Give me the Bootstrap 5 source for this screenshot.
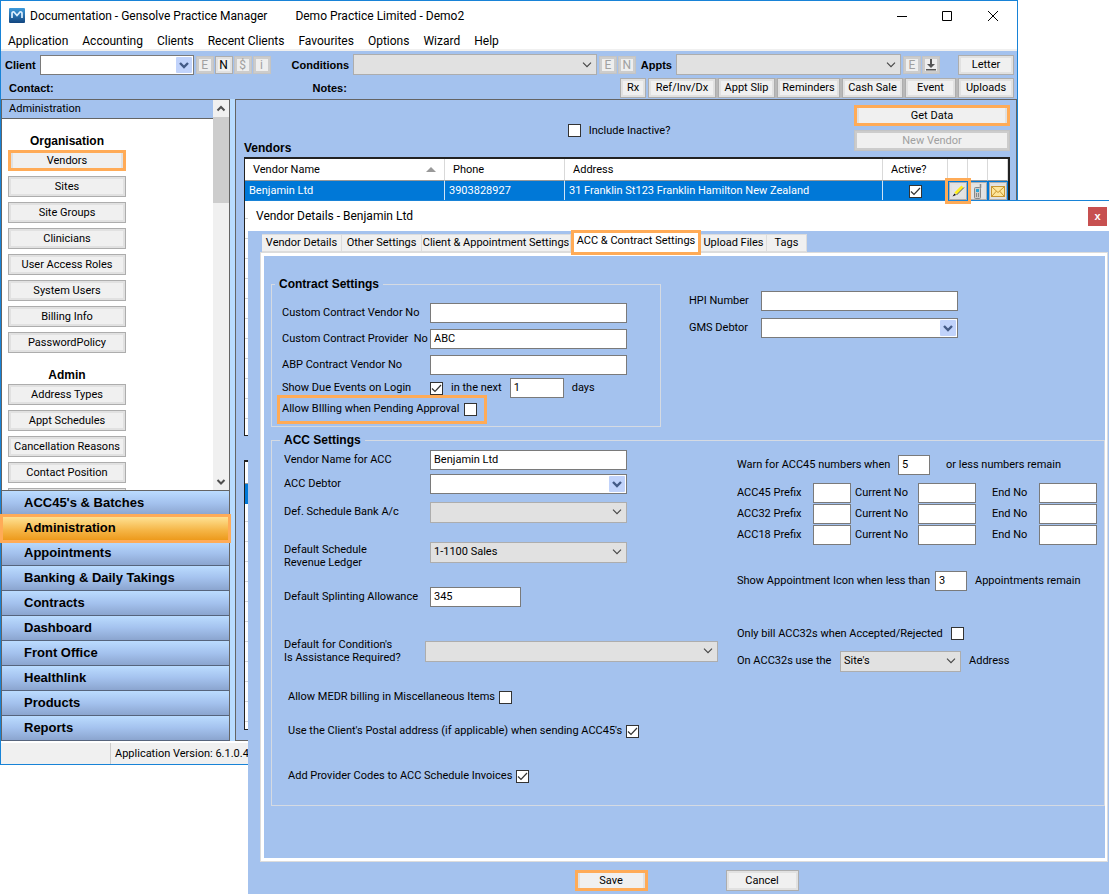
<!DOCTYPE html>
<html lang="en">
<head>
<meta charset="utf-8">
<meta name="viewport" content="width=device-width, initial-scale=1">
<title>Gensolve Practice Manager</title>
<link href="https://cdn.jsdelivr.net/npm/bootstrap@5.3.0/dist/css/bootstrap.min.css" rel="stylesheet">
<style>
:root { --sky:#a4c2ee; --pale:#b9dcff; --hl:#ffab57; --edge:#1883d7; --rule:#646464; }
body { font:11px/14px Roboto, Arial, sans-serif; color:#000; background:#fff; position:relative; min-height:100vh; overflow-x:hidden; }
.ui-font { font-size:12px; line-height:18px; }
label, a { white-space:nowrap; }
a { color:inherit; text-decoration:none; }
b, h2, legend, .fw-bold, .side-nav a { font-family:"Liberation Sans", Arial, sans-serif; }

/* shared controls */
.btn.wbtn { --bs-btn-padding-x:0; --bs-btn-padding-y:0; --bs-btn-border-radius:0; font-size:11px; line-height:14px; height:20px; color:#000; background:#f0f0f0; border:1px solid #adadad; box-shadow:inset 0 0 0 2px #e1e1e1; white-space:nowrap; }
.btn.wbtn:disabled { color:#a0a0a0; border-color:#c4c4c4; box-shadow:inset 0 0 0 2px #ccc; opacity:1; }
.btn.wbtn.marked { border:3px solid var(--hl); box-shadow:inset 2px 0 #e1e1e1, inset -2px 0 #e1e1e1; }
.form-control.wbox, .form-select.wlist { font-size:11px; line-height:14px; height:20px; min-height:0; padding:0 3px 1px; border:1px solid #7a7a7a; border-radius:0; color:#000; }
.form-select.wlist { height:21px; padding:0 20px 0 3px; border-color:#adadad; background:#e1e1e1 url("data:image/svg+xml,%3Csvg xmlns='http://www.w3.org/2000/svg' width='10' height='6'%3E%3Cpath d='M1 .7l4 4 4-4' fill='none' stroke='%23444' stroke-width='1.1'/%3E%3C/svg%3E") no-repeat right 4px center; background-size:10px 6px; }
.form-select.wcombo { height:20px; border-color:#7a7a7a; background:#fff url("data:image/svg+xml,%3Csvg xmlns='http://www.w3.org/2000/svg' width='16' height='16'%3E%3Crect width='16' height='16' rx='1' fill='%23c1d3fb'/%3E%3Cpath d='M4 6l4 4 4-4' fill='none' stroke='%23445b87' stroke-width='2.4'/%3E%3C/svg%3E") no-repeat right 1px center; background-size:16px 16px; }
.form-check-input.wcheck { width:13px; height:13px; margin:0; flex:none; border:1px solid #333; border-radius:0; background:#fff; }
.form-check-input.wcheck:checked { background:#fff url("data:image/svg+xml,%3Csvg xmlns='http://www.w3.org/2000/svg' width='11' height='11'%3E%3Cpath d='M1 5.5l3 3L10 2' fill='none' stroke='%23333' stroke-width='1.2'/%3E%3C/svg%3E") center/11px 11px no-repeat; }

/* main window */
.app-window { margin-right:91px; border:1px solid var(--edge); background:#fff; }
.app-title { height:29px; padding-left:8px; padding-right:18px; }
.app-menu { height:21px; padding-left:7px; gap:14px; line-height:22px; border-bottom:2px solid #f0f0f0; }
.tools { background:var(--sky); height:48px; padding-right:3px; }
.tools b { font-size:11px; }
.tools-row { height:23px; }
.btn.tool { width:18px; height:18px; font-size:12px; }
.btn.tool:disabled { background:#eee; }
.tool-set { display:flex; flex:none; gap:1px; padding:0 5px 0 2px; }
.tool-end { padding-right:18px; }
.w-client { width:154px; }
.w-letter { width:56px; }
.wide-a { flex:244 1 0; }
.wide-b { flex:223 1 0; }
.notes { margin-left:259px; }
.shelf { display:grid; grid-template-columns:26px 68px 57px 63px 61px 51px 56px; gap:2px; background:linear-gradient(90deg, transparent 96px, #b9b9b9 96px); }
.work { background:var(--pale); gap:5px; }
.side { width:229px; border:1px solid var(--rule); border-bottom:0; background:#fff; flex:none; }
.side-scroll { height:391px; border-bottom:1px solid var(--rule); }
.side-head { background:var(--sky); height:19px; border-bottom:1px solid var(--rule); padding:2px 7px; }
.side-list { height:371px; overflow:hidden; padding:0 0 0 6px; }
.side-list h2 { font-size:12px; line-height:18px; font-weight:700; margin:13px 0 0; text-align:center; width:118px; }
.side-list .wbtn { display:block; width:118px; height:21px; margin-bottom:5px; }
.bar { width:16px; background:#f0f0f0; }
.bar .thumb { height:86px; background:#cdcdcd; }
.side-nav a { display:block; height:25px; line-height:23px; font-size:13px; font-weight:700; padding-left:22px; border-bottom:1px solid #56647c; background:linear-gradient(#bbdcff, #a4c2ee 50%, #8ba5cf); }
.side-nav a.current { position:relative; background:linear-gradient(#ffe599, #f5b546 60%, #ed9a1c); outline:3px solid var(--hl); outline-offset:-1px; }
.main-pane { background:var(--sky); border:1px solid var(--rule); min-width:0; padding:5px 6px 9px 8px; }
.pane-top { height:52px; display:grid; grid-template-columns:1fr auto 1fr; }
.pane-top h2, .wset legend { font-size:12px; line-height:14px; font-weight:700; margin:0; }
.pane-top h2 { padding-bottom:2px; }
.pane-top .btn { width:156px; height:21px; }
.grid-box { border:1px solid #222; border-width:2px 2px 1px 1px; background:repeating-linear-gradient(#fff 0 19px, #d5d5d5 19px 20px); }
.grid-one { height:279px; }
.grid-two { height:270px; margin-top:24px; }
.grid-box table { width:100%; table-layout:fixed; border-collapse:separate; border-spacing:0; margin:0; }
.grid-box th { height:22px; font-weight:400; background:#fff; border-right:1px solid #d9d9d9; border-bottom:1px solid #999; padding:0 8px; }
.grid-box td { height:20px; color:#fff; background:#0078d7; border-right:1px solid #cfe3f5; padding:0 4px; white-space:nowrap; }
.grid-box td.ico { padding:0 0 0 1px; border-right:0; }
.c-200 { width:200px; } .c-120 { width:120px; } .c-65 { width:65px; } .c-20 { width:20px; }
.grid-box .btn.wbtn { width:18px; height:18px; display:flex; align-items:center; justify-content:center; background:#e4e4e4; }
.grid-box .btn.pick { outline:3px solid var(--hl); outline-offset:1px; position:relative; z-index:2; }
.sort { width:0; height:0; border:5px solid transparent; border-top:0; border-bottom-color:#999; }
.status { height:23px; background:#f0f0f0; border-top:2px solid #fff; line-height:21px; }
.status span:first-child { width:110px; border-right:1px solid #ccc; margin-right:4px; }

/* vendor dialog */
.dialog-win { position:absolute; left:248px; right:0; top:200px; background:var(--sky); border-top:1px solid var(--edge); padding-bottom:3px; }
.dialog-title { background:#fff; height:30px; padding:0 2px 0 8px; }
.btn.close-x { width:19px; height:19px; padding:0; border:0; border-radius:0; background:#c75050; color:#fff; font:bold 11px/17px "Liberation Sans", Arial, sans-serif; }
.dialog-tabs { padding:3px 0 0 14px; height:21px; }
.dialog-tabs .nav-link { color:#000; padding:0; height:18px; line-height:16px; background:#f0f0f0; border:1px solid #dcdcdc; border-left-width:0; border-radius:0; text-align:center; }
.dialog-tabs .nav-link.active { position:relative; height:25px; margin-top:-4px; background:#fff; color:#000; border:3px solid var(--hl); z-index:1; }
.t-80 { width:80px; } .t-149 { width:149px; } .t-130 { width:130px; } .t-66 { width:66px; } .t-40 { width:40px; }
.tab-page { margin:0 1px 0 12px; border:1px solid #dcdcdc; box-shadow:inset 3px 3px #fff, inset -2px -3px #fff; padding:24px 2px 55px 10px; }
.wset { margin:0; padding:0 0 5px 12px; min-width:0; border:1px solid #d5dae2; }
.wset legend { float:none; width:auto; padding:0 4px; margin-left:-4px; }
.set-contract { width:390px; padding:0 0 6px 10px; }
.set-contract legend { margin-left:-7px; }
.set-contract .lines { grid-template-rows:26px 26px 26px 20px 22px; margin-top:9px; }
.set-acc { margin-top:6px; }
.lines { display:grid; }
.lines > div { display:flex; align-items:center; min-width:0; }
.two-part { display:grid; grid-template-columns:453px minmax(0,1fr); }
.rows-left { grid-template-rows:25px 24px 32px 48px 42px 66px 26px 42px 48px; }
.rows-right { grid-template-rows:35px 21px 21px 21px 72px 33px 22px; align-content:start; }
.hpi { grid-template-rows:27px 27px; margin:10px 0 0 28px; }
.line-h { line-height:13px; }
.l-148 { width:148px; } .l-146 { width:146px; } .l-141 { width:141px; } .l-161 { width:161px; } .l-198 { width:198px; } .l-76 { width:76px; } .l-63 { width:63px; } .l-47 { width:47px; } .l-103 { width:103px; } .l-72 { width:72px; }
.f-197 { width:197px; } .f-293 { width:293px; } .f-91 { width:91px; } .f-54 { width:54px; } .f-32 { width:32px; } .f-38 { width:38px; } .f-58 { width:58px; } .f-121 { width:121px; }
.lines label, .lines input, .lines select { flex:none; }
.boxed { outline:3px solid var(--hl); outline-offset:2px; height:19px; padding-right:5px; }
.btn.act { width:73px; height:21px; }
.gap-act { gap:78px; padding-top:8px; }
</style>
</head>
<body>
<div class="app-window">
  <header class="app-title ui-font d-flex align-items-center">
    <svg class="me-1" width="17" height="15" viewBox="0 0 17 15"><defs><linearGradient id="lg" x2="0" y2="1"><stop stop-color="#3d9bdc"/><stop offset="1" stop-color="#12457f"/></linearGradient></defs><rect width="16" height="15" rx="1" fill="url(#lg)"/><path d="M3 10V5.500Q3 3.500 5 4l3 3.500L11 4q2-.5 2 1.500V10" fill="none" stroke="#dff0ff" stroke-width="1.700"/></svg>
    <span>Documentation - Gensolve Practice Manager</span>
    <span class="ms-4 ps-1">Demo Practice Limited - Demo2</span>
    <svg class="ms-auto" width="102" height="12" viewBox="0 0 102 12" fill="none" stroke="#000"><path d="M0 6.500h10M45.500 1.500h9v9h-9zM91 1l10 10M101 1L91 11"/></svg>
  </header>
  <nav class="app-menu ui-font d-flex">
    <a href="#">Application</a><a href="#">Accounting</a><a href="#">Clients</a><a href="#">Recent Clients</a><a href="#">Favourites</a><a href="#">Options</a><a href="#">Wizard</a><a href="#">Help</a>
  </nav>
  <section class="tools">
    <div class="tools-row d-flex align-items-center pt-1">
      <label class="fw-bold ps-1 me-1" for="client">Client</label>
      <select id="client" class="form-select wlist wcombo w-client"></select>
      <div class="tool-set me-3">
        <button class="btn wbtn tool" disabled>E</button><button class="btn wbtn tool">N</button><button class="btn wbtn tool" disabled>$</button><button class="btn wbtn tool" disabled>i</button>
      </div>
      <label class="fw-bold me-1" for="cond">Conditions</label>
      <select id="cond" class="form-select wlist wide-a"></select>
      <div class="tool-set"><button class="btn wbtn tool" disabled>E</button><button class="btn wbtn tool" disabled>N</button></div>
      <label class="fw-bold me-1" for="appts">Appts</label>
      <select id="appts" class="form-select wlist wide-b"></select>
      <div class="tool-set tool-end"><button class="btn wbtn tool" disabled>E</button><button class="btn wbtn tool" disabled aria-label="Download"><svg class="d-block mx-auto" width="12" height="12" viewBox="0 0 12 12"><path d="M5 0h2v5h3L6 9 2 5h3zM1 10h10v1.500H1z" fill="#555"/></svg></button></div>
      <button class="btn wbtn w-letter flex-shrink-0">Letter</button>
    </div>
    <div class="tools-row d-flex align-items-center pt-1">
      <b class="ps-2">Contact:</b><b class="notes">Notes:</b>
      <div class="shelf ms-auto">
        <button class="btn wbtn">Rx</button><button class="btn wbtn">Ref/Inv/Dx</button><button class="btn wbtn">Appt Slip</button><button class="btn wbtn">Reminders</button><button class="btn wbtn">Cash Sale</button><button class="btn wbtn">Event</button><button class="btn wbtn">Uploads</button>
      </div>
    </div>
  </section>
  <div class="work d-flex">
    <aside class="side">
      <div class="side-scroll d-flex">
        <div class="flex-grow-1">
          <div class="side-head">Administration</div>
          <div class="side-list">
            <h2>Organisation</h2>
            <button class="btn wbtn marked">Vendors</button>
            <button class="btn wbtn">Sites</button>
            <button class="btn wbtn">Site Groups</button>
            <button class="btn wbtn">Clinicians</button>
            <button class="btn wbtn">User Access Roles</button>
            <button class="btn wbtn">System Users</button>
            <button class="btn wbtn">Billing Info</button>
            <button class="btn wbtn">PasswordPolicy</button>
            <h2>Admin</h2>
            <button class="btn wbtn">Address Types</button>
            <button class="btn wbtn">Appt Schedules</button>
            <button class="btn wbtn">Cancellation Reasons</button>
            <button class="btn wbtn">Contact Position</button>
            <button class="btn wbtn" aria-label="More"></button>
          </div>
        </div>
        <div class="bar d-flex flex-column">
          <svg width="16" height="17" viewBox="0 0 16 17"><path d="M4.500 10.500L8 7l3.500 3.500" fill="none" stroke="#505050" stroke-width="2"/></svg>
          <div class="thumb"></div>
          <svg class="mt-auto" width="16" height="17" viewBox="0 0 16 17"><path d="M4.500 7L8 10.500 11.500 7" fill="none" stroke="#505050" stroke-width="2"/></svg>
        </div>
      </div>
      <nav class="side-nav">
        <a href="#">ACC45's &amp; Batches</a><a href="#" class="current">Administration</a><a href="#">Appointments</a><a href="#">Banking &amp; Daily Takings</a><a href="#">Contracts</a><a href="#">Dashboard</a><a href="#">Front Office</a><a href="#">Healthlink</a><a href="#">Products</a><a href="#">Reports</a>
      </nav>
    </aside>
    <main class="main-pane flex-grow-1">
      <div class="pane-top">
        <h2 class="align-self-end">Vendors</h2>
        <div class="d-flex gap-2 align-self-center pe-3"><input type="checkbox" class="form-check-input wcheck" id="inactive"><label for="inactive">Include Inactive?</label></div>
        <div class="d-flex flex-column align-items-end gap-1">
          <button class="btn wbtn marked">Get Data</button>
          <button class="btn wbtn" disabled>New Vendor</button>
        </div>
      </div>
      <div class="grid-box grid-one">
        <table>
          <colgroup><col class="c-200"><col class="c-120"><col><col class="c-65"><col class="c-20"><col class="c-20"><col class="c-20"></colgroup>
          <thead><tr><th><div class="d-flex justify-content-between align-items-center">Vendor Name<i class="sort"></i></div></th><th>Phone</th><th>Address</th><th>Active?</th><th></th><th></th><th></th></tr></thead>
          <tbody><tr><td>Benjamin Ltd</td><td>3903828927</td><td>31 Franklin St123 Franklin Hamilton New Zealand</td>
            <td><input type="checkbox" class="form-check-input wcheck d-block mx-auto" checked aria-label="Active"></td>
            <td class="ico"><button class="btn wbtn pick" aria-label="Edit"><svg width="14" height="14" viewBox="0 0 14 14"><path d="M4.500 9.500L11.500 2.500" stroke="#ffee1a" stroke-width="3"/><path d="M5.500 11L13 3.500" stroke="#333" stroke-width=".8"/><path d="M1.500 12.500l2-3 1.500 1.500z" fill="#111"/></svg></button></td>
            <td class="ico"><button class="btn wbtn" aria-label="Phone"><svg width="10" height="15" viewBox="0 0 10 15"><path d="M7.500 0v4" stroke="#888" stroke-width="1.500"/><rect x="1.500" y="3.500" width="6" height="11" rx="1" fill="#ccc" stroke="#888"/><path d="M3 5h3v3H3z" fill="#2aa5d8"/><path d="M3 10h1M5 10h1M3 12h1M5 12h1" stroke="#444"/></svg></button></td>
            <td class="ico"><button class="btn wbtn" aria-label="Email"><svg width="14" height="11" viewBox="0 0 14 11"><rect x=".5" y=".5" width="13" height="10" fill="#fde59b" stroke="#c9962f"/><path d="M1 1l6 5.500L13 1M1 10l4.500-5M13 10L8.500 5" fill="none" stroke="#c9962f"/></svg></button></td></tr></tbody>
        </table>
      </div>
      <div class="grid-box grid-two"><table><thead><tr><th></th></tr></thead><tbody><tr><td></td></tr></tbody></table></div>
    </main>
  </div>
  <footer class="status d-flex"><span></span><span>Application Version: 6.1.0.41</span></footer>
</div>

<section class="dialog-win" role="dialog" aria-labelledby="dlg">
  <div class="dialog-title d-flex justify-content-between align-items-center"><span id="dlg" class="ui-font">Vendor Details - Benjamin Ltd</span><button class="btn close-x" aria-label="Close">x</button></div>
  <nav class="dialog-tabs d-flex">
    <a class="nav-link t-80" href="#">Vendor Details</a><a class="nav-link t-80" href="#">Other Settings</a><a class="nav-link t-149" href="#">Client &amp; Appointment Settings</a><a class="nav-link active t-130" href="#">ACC &amp; Contract Settings</a><a class="nav-link t-66" href="#">Upload Files</a><a class="nav-link t-40" href="#">Tags</a>
  </nav>
  <div class="tab-page">
    <div class="d-flex align-items-start">
      <fieldset class="wset set-contract">
        <legend>Contract Settings</legend>
        <div class="lines">
          <div><label class="l-148" for="c1">Custom Contract Vendor No</label><input id="c1" class="form-control wbox f-197"></div>
          <div><label class="l-148" for="c2">Custom Contract Provider&nbsp; No</label><input id="c2" class="form-control wbox f-197" value="ABC"></div>
          <div><label class="l-148" for="c3">ABP Contract Vendor No</label><input id="c3" class="form-control wbox f-197"></div>
          <div><label class="l-148" for="c4">Show Due Events on Login</label><input type="checkbox" id="c4" class="form-check-input wcheck me-2" checked><label class="me-2" for="c5">in the next</label><input id="c5" class="form-control wbox f-54" value="1"><span class="ms-2">days</span></div>
          <div><div class="boxed d-inline-flex align-items-center gap-1"><label for="c6">Allow BIlling when Pending Approval</label><input type="checkbox" id="c6" class="form-check-input wcheck"></div></div>
        </div>
      </fieldset>
      <div class="lines hpi">
        <div><label class="l-72" for="h1">HPI Number</label><input id="h1" class="form-control wbox f-197"></div>
        <div><label class="l-72" for="h2">GMS Debtor</label><select id="h2" class="form-select wlist wcombo f-197"></select></div>
      </div>
    </div>
    <fieldset class="wset set-acc">
      <legend>ACC Settings</legend>
      <div class="two-part">
        <div class="lines rows-left">
          <div><label class="l-146" for="a1">Vendor Name for ACC</label><input id="a1" class="form-control wbox f-197" value="Benjamin Ltd"></div>
          <div><label class="l-146" for="a2">ACC Debtor</label><select id="a2" class="form-select wlist wcombo f-197"></select></div>
          <div><label class="l-146" for="a3">Def. Schedule Bank A/c</label><select id="a3" class="form-select wlist f-197"></select></div>
          <div><label class="l-146 line-h pt-2" for="a4">Default Schedule<br>Revenue Ledger</label><select id="a4" class="form-select wlist f-197"><option>1-1100 Sales</option></select></div>
          <div><label class="l-146" for="a5">Default Splinting Allowance</label><input id="a5" class="form-control wbox f-91" value="345"></div>
          <div><label class="l-141 line-h" for="a6">Default for Condition's<br>Is Assistance Required?</label><select id="a6" class="form-select wlist f-293"></select></div>
          <div class="ps-1 gap-1"><label for="a7">Allow MEDR billing in Miscellaneous Items</label><input type="checkbox" id="a7" class="form-check-input wcheck"></div>
          <div class="ps-1 gap-1"><label for="a8">Use the Client's Postal address (if applicable) when sending ACC45's</label><input type="checkbox" id="a8" class="form-check-input wcheck" checked></div>
          <div class="ps-1 gap-1"><label for="a9">Add Provider Codes to ACC Schedule Invoices</label><input type="checkbox" id="a9" class="form-check-input wcheck" checked></div>
        </div>
        <div class="lines rows-right">
          <div><label class="l-161" for="b1">Warn for ACC45 numbers when</label><input id="b1" class="form-control wbox f-32" value="5"><span class="ms-3">or less numbers remain</span></div>
          <div><label class="l-76" for="p1">ACC45 Prefix</label><input id="p1" class="form-control wbox f-38 me-1"><label class="l-63" for="q1">Current No</label><input id="q1" class="form-control wbox f-58 me-3"><label class="l-47" for="r1">End No</label><input id="r1" class="form-control wbox f-58"></div>
          <div><label class="l-76" for="p2">ACC32 Prefix</label><input id="p2" class="form-control wbox f-38 me-1"><label class="l-63" for="q2">Current No</label><input id="q2" class="form-control wbox f-58 me-3"><label class="l-47" for="r2">End No</label><input id="r2" class="form-control wbox f-58"></div>
          <div><label class="l-76" for="p3">ACC18 Prefix</label><input id="p3" class="form-control wbox f-38 me-1"><label class="l-63" for="q3">Current No</label><input id="q3" class="form-control wbox f-58 me-3"><label class="l-47" for="r3">End No</label><input id="r3" class="form-control wbox f-58"></div>
          <div><label class="l-198" for="b2">Show Appointment Icon when less than</label><input id="b2" class="form-control wbox f-32" value="3"><span class="ms-2">Appointments remain</span></div>
          <div class="gap-2"><label for="b3">Only bill ACC32s when Accepted/Rejected</label><input type="checkbox" id="b3" class="form-check-input wcheck"></div>
          <div><label class="l-103" for="b4">On ACC32s use the</label><select id="b4" class="form-select wlist f-121"><option>Site's</option></select><span class="ms-2">Address</span></div>
        </div>
      </div>
    </fieldset>
  </div>
  <div class="gap-act d-flex justify-content-center ps-3"><button class="btn wbtn marked act">Save</button><button class="btn wbtn act">Cancel</button></div>
</section>
<script src="https://cdn.jsdelivr.net/npm/bootstrap@5.3.0/dist/js/bootstrap.bundle.min.js"></script>
</body>
</html>
